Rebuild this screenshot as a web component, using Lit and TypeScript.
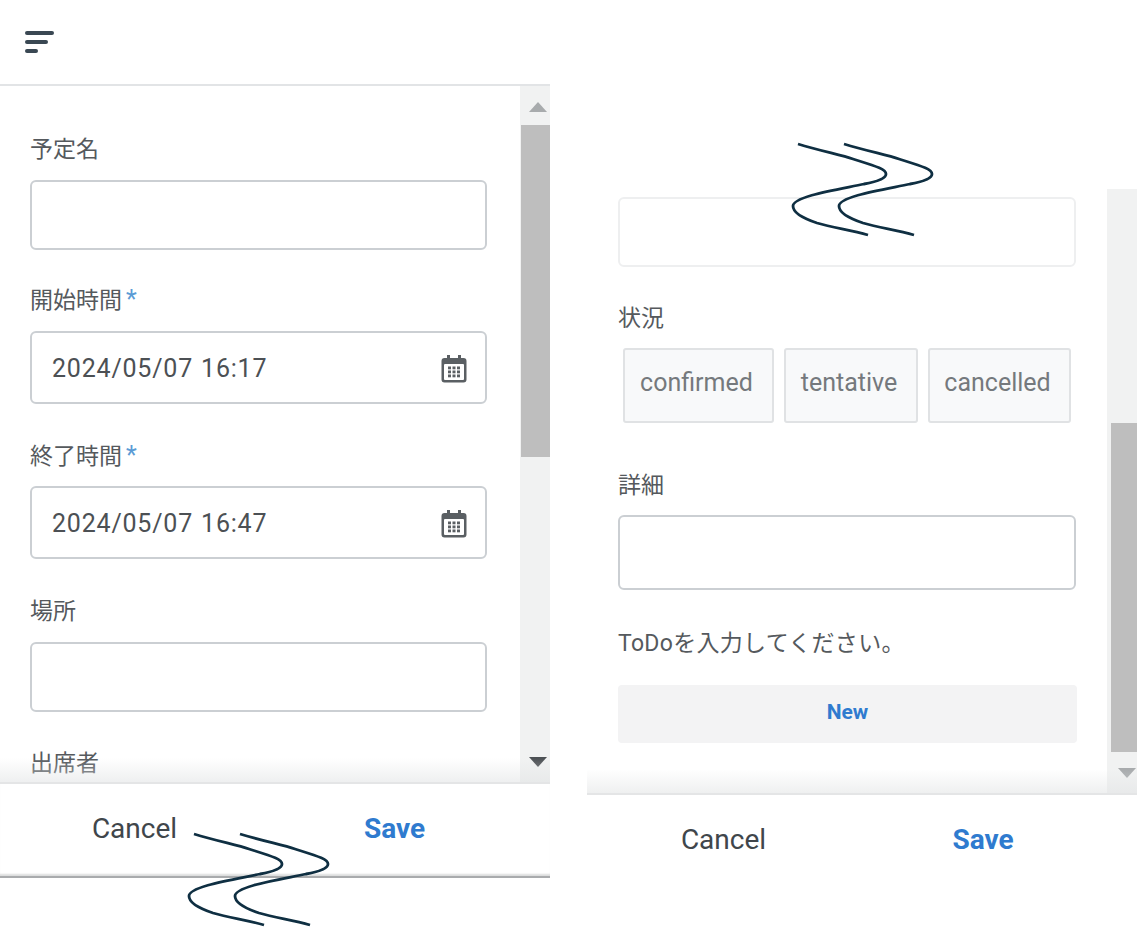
import { LitElement, html, css, svg } from "lit";
import { customElement } from "lit/decorators.js";

const calendar = html`<svg class="cal" viewBox="0 0 26 28" aria-hidden="true">
  <path fill="#5a5f63" d="M6 0h3v3h8V0h3v3h2.500A3 3 0 0 1 25.500 6v18.500a3 3 0 0 1-3 3h-19a3 3 0 0 1-3-3V6a3 3 0 0 1 3-3H6z" />
  <rect x="3" y="9" width="20" height="16" rx="1" fill="#fff" />
  ${[7, 11.5, 16].map((x) =>
    [11.5, 15.5, 19.5].map((y) => svg`<rect x="${x}" y="${y}" width="3" height="2.800" fill="#5a5f63" />`)
  )}
</svg>`;

const squiggle = (cls: string) => html`<svg class="squiggle ${cls}" viewBox="0 0 146 96" aria-hidden="true">
  <path d="M7 3C30 10 50 14 62 18C84 25 95 28 95 33C95 38 84 41 73 43C50 48 2 55 2 65C2 72 14 78 26 82C44 87 60 89 77 94" />
  <path d="M53 3C76 10 96 14 108 18C130 25 141 28 141 33C141 38 130 41 119 43C96 48 48 55 48 65C48 72 60 78 72 82C90 87 106 89 123 94" />
</svg>`;

@customElement("app-root")
export class AppRoot extends LitElement {
  static styles = css`
    :host {
      display: block;
      width: 1137px;
      height: 927px;
      overflow: hidden;
      background: #fff;
      font-family: Roboto, "Noto Sans CJK JP", sans-serif;
    }
    .page {
      display: flex;
      gap: 37px;
      align-items: flex-start;
      height: 927px;
    }
    .panel {
      position: relative;
      width: 550px;
      flex: none;
    }
    .head {
      box-sizing: border-box;
      height: 86px;
      padding: 31px 0 0 25px;
      border-bottom: 2px solid #e2e4e6;
    }
    .menu {
      display: flex;
      flex-direction: column;
      gap: 5px;
    }
    .menu i {
      display: block;
      height: 4px;
      border-radius: 2px;
      background: #3a4853;
    }
    .menu i:nth-child(1) { width: 29px; }
    .menu i:nth-child(2) { width: 23px; }
    .menu i:nth-child(3) { width: 13px; }
    .body {
      display: flex;
      position: relative;
      overflow: hidden;
    }
    .left-body { height: 696px; }
    .right-body { height: 604px; margin-top: 189px; }
    .form {
      flex: 1;
      min-width: 0;
      box-sizing: border-box;
      padding: 47px 33px 0 30px;
    }
    .right-body .form {
      padding: 8px 30px 0 31px;
    }
    .label {
      font-size: 23px;
      line-height: 34px;
      color: #55595d;
      margin-bottom: 13px;
    }
    .label.req { margin-bottom: 12px; }
    .label b {
      font-weight: 400;
      font-size: 25px;
      line-height: 0;
      margin-left: 4px;
      color: #5b9bd5;
    }
    .field { margin-bottom: 36px; }
    .field.first-left { margin-bottom: 34px; }
    .field.short { margin-bottom: 35px; }
    .input {
      box-sizing: border-box;
      display: flex;
      align-items: center;
      justify-content: space-between;
      padding: 0 18px 0 20px;
      border: 2px solid #cbcfd3;
      border-radius: 6px;
      background: #fff;
      font-size: 25px;
      letter-spacing: 0.8px;
      word-spacing: 1px;
      color: #4c5054;
    }
    .input span { position: relative; top: 1px; }
    .h69 { height: 70px; }
    .h73 { height: 73px; }
    .h75 { height: 75px; }
    .w-detail { margin-right: 1px; }
    .faded { border-color: #eeeff0; margin-right: 1px; }
    .cal { width: 26px; height: 28px; display: block; margin-top: 2px; }
    .right-body .status-field { margin-bottom: 46px; }
    .right-body .first { margin-bottom: 35px; }
    .chips {
      display: flex;
      gap: 10px;
      padding-left: 5px;
    }
    .label.tight { margin-bottom: 12px; }
    .chip {
      box-sizing: border-box;
      height: 75px;
      padding: 19px 4px 0 0;
      text-align: center;
      border: 2px solid #e0e2e4;
      border-radius: 3px;
      background: #f8f9fa;
      font-size: 25px;
      line-height: 28px;
      color: #75797d;
    }
    .c1 { width: 151px; }
    .c2 { width: 134px; }
    .c3 { width: 143px; }
    .todo {
      font-size: 23px;
      letter-spacing: 0.3px;
      line-height: 32px;
      color: #55595d;
      margin: 38px 0 25px;
    }
    .new {
      height: 58px;
      line-height: 54px;
      text-align: center;
      border-radius: 4px;
      background: #f3f3f4;
      font-size: 21px;
      font-weight: 700;
      color: #2f7bcf;
    }
    .bar {
      flex: none;
      width: 30px;
      display: flex;
      flex-direction: column;
      align-items: flex-end;
      background: #f1f2f2;
    }
    .spacer { flex: 1; }
    .arrow {
      flex: none;
      align-self: stretch;
      box-sizing: border-box;
      padding-left: 6px;
      display: flex;
      align-items: center;
      justify-content: center;
    }
    .right-bar .arrow { padding-left: 10px; }
    .arrow i {
      display: block;
      width: 0;
      height: 0;
      border-left: 9px solid transparent;
      border-right: 9px solid transparent;
    }
    .up { height: 41px; }
    .up i { border-bottom: 10px solid #a8abad; }
    .down { height: 41px; }
    .down i { border-top: 10px solid #4c5054; }
    .right-bar .down i { border-top-color: #a8abad; }
    .thumb { background: #bebebe; width: 29px; }
    .right-bar .thumb { width: 26px; }
    .left-thumb { height: 332px; margin-top: -2px; }
    .right-thumb { height: 329px; }
    .fade {
      position: absolute;
      left: 0;
      right: 0;
      bottom: 0;
      height: 24px;
      background: linear-gradient(to bottom, rgba(225, 227, 228, 0), rgba(225, 227, 228, 0.55));
      pointer-events: none;
    }
    .foot {
      box-sizing: border-box;
      display: grid;
      grid-template-columns: 275px 275px;
      border-top: 2px solid #e4e5e6;
      font-size: 28px;
      line-height: 90px;
      color: #40464b;
      text-align: center;
    }
    .foot .save {
      font-weight: 700;
      color: #2f7bcf;
    }
    .left-foot {
      height: 96px;
      border-bottom: 2px solid #a9abad;
      box-shadow: inset 0 -3px 2px -1px #dcdddd;
    }
    .left-foot span:first-child { padding-right: 6px; }
    .left-foot .save { padding-right: 36px; }
    .right-foot { height: 96px; }
    .right-foot span:first-child { padding-right: 2px; }
    .right-foot .save { padding-right: 33px; }
    .squiggle {
      position: absolute;
      width: 146px;
      height: 96px;
      fill: none;
      stroke: #0f2f42;
      stroke-width: 2.800;
    }
    .sq-left { left: 187px; top: 831px; }
    .sq-right { left: 204px; top: 141px; }
  `;

  render() {
    return html`<div class="page">
      <section class="panel">
        <div class="head">
          <div class="menu"><i></i><i></i><i></i></div>
        </div>
        <div class="body left-body">
          <div class="form">
            <div class="field first-left">
              <div class="label">予定名</div>
              <div class="input h69"></div>
            </div>
            <div class="field">
              <div class="label">開始時間<b>*</b></div>
              <div class="input h73"><span>2024/05/07 16:17</span>${calendar}</div>
            </div>
            <div class="field">
              <div class="label req">終了時間<b>*</b></div>
              <div class="input h73"><span>2024/05/07 16:47</span>${calendar}</div>
            </div>
            <div class="field short">
              <div class="label">場所</div>
              <div class="input h69"></div>
            </div>
            <div class="field">
              <div class="label">出席者</div>
            </div>
          </div>
          <div class="bar">
            <div class="arrow up"><i></i></div>
            <div class="thumb left-thumb"></div>
            <div class="spacer"></div>
            <div class="arrow down"><i></i></div>
          </div>
          <div class="fade"></div>
        </div>
        <div class="foot left-foot"><span>Cancel</span><span class="save">Save</span></div>
        ${squiggle("sq-left")}
      </section>
      <section class="panel">
        <div class="body right-body">
          <div class="form">
            <div class="field first"><div class="input h69 faded"></div></div>
            <div class="field status-field">
              <div class="label tight">状況</div>
              <div class="chips">
                <div class="chip c1">confirmed</div>
                <div class="chip c2">tentative</div>
                <div class="chip c3">cancelled</div>
              </div>
            </div>
            <div class="label tight">詳細</div>
            <div class="input h75 w-detail"></div>
            <div class="todo">ToDoを入力してください。</div>
            <div class="new">New</div>
          </div>
          <div class="bar right-bar">
            <div class="spacer"></div>
            <div class="thumb right-thumb"></div>
            <div class="arrow down"><i></i></div>
          </div>
          <div class="fade"></div>
        </div>
        <div class="foot right-foot"><span>Cancel</span><span class="save">Save</span></div>
        ${squiggle("sq-right")}
      </section>
    </div>`;
  }
}
